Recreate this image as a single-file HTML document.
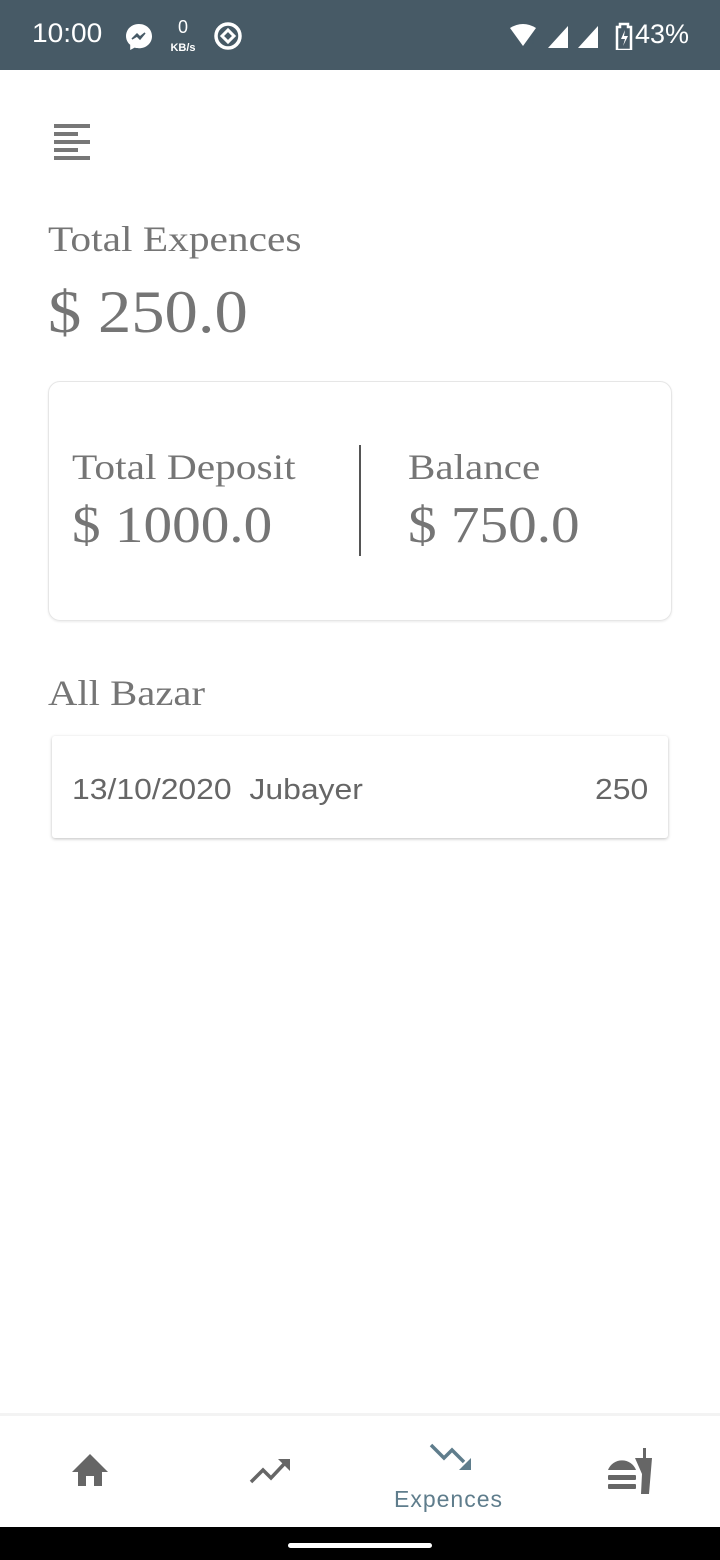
<!DOCTYPE html>
<html><head><meta charset="utf-8"><style>
*{margin:0;padding:0;box-sizing:border-box}
body{width:720px;height:1560px;position:relative;background:#fff;overflow:hidden;font-family:"Liberation Sans",sans-serif}
.a{position:absolute}
.serif{font-family:"Liberation Serif",serif;color:#757575;white-space:nowrap;transform-origin:0 0}
.sb{left:0;top:0;width:720px;height:70px;background:#475a66;color:#fff}
</style></head><body>
<div class="a sb">
 <div class="a" style="left:32px;top:18px;font-size:27px;transform:scaleX(1.04);transform-origin:0 0">10:00</div>
 <svg class="a" style="left:124px;top:22px" width="30" height="30" viewBox="0 0 30 30"><path d="M15 2C7.5 2 2 7.3 2 14c0 3.6 1.6 6.7 4.2 8.8V28l4.4-2.4c1.4.4 2.8.6 4.4.6 7.5 0 13-5.3 13-12S22.5 2 15 2z" fill="#fff"/><path d="M8 17l5-5 3 3 5-4-5 6-3-3z" fill="#475a66" stroke="#475a66" stroke-width="1.5"/></svg>
 <div class="a" style="left:168px;top:18px;font-size:18px;width:30px;text-align:center;line-height:18px">0<br><span style="font-size:11px;font-weight:bold">KB/s</span></div>
 <svg class="a" style="left:212px;top:20px" width="32" height="32" viewBox="0 0 32 32"><circle cx="16" cy="16" r="12" fill="none" stroke="#fff" stroke-width="3.5"/><path d="M10 16l6-6 6 6-6 6z" fill="none" stroke="#fff" stroke-width="3"/></svg>
 <svg class="a" style="left:508px;top:22px" width="150" height="28" viewBox="0 0 150 28"><path d="M2 6Q15 -2 28 6L15 24z" fill="#fff"/><text x="20" y="22" font-size="12" fill="#475a66" font-family="Liberation Sans">4</text><path d="M40 26L60 4V26z M70 26L90 4V26z" fill="#fff"/><path d="M112 2h8v3h3v23h-14V5h3z" fill="none" stroke="#fff" stroke-width="2.5"/><path d="M117 8l-4 9h4l-2 7 5-10h-4z" fill="#fff"/></svg>
 <div class="a" style="left:635px;top:19px;font-size:27px">43%</div>
</div>
<div class="a" style="left:54px;top:124px;width:36px;height:36px">
 <div class="a" style="top:0;width:36px;height:4px;background:#777"></div>
 <div class="a" style="top:8px;width:24px;height:4px;background:#777"></div>
 <div class="a" style="top:16px;width:36px;height:4px;background:#777"></div>
 <div class="a" style="top:24px;width:24px;height:4px;background:#777"></div>
 <div class="a" style="top:32px;width:36px;height:4px;background:#777"></div>
</div>
<div class="a serif" style="left:48px;top:218px;font-size:36px;transform:scaleX(1.15)">Total Expences</div>
<div class="a serif" style="left:48px;top:278px;font-size:60px;transform:scaleX(1.11)">$ 250.0</div>
<div class="a" style="left:48px;top:381px;width:624px;height:240px;border:1px solid #e6e6e6;border-radius:12px;box-shadow:0 1px 2px rgba(0,0,0,.08)"></div>
<div class="a serif" style="left:72px;top:446px;font-size:36px;transform:scaleX(1.15)">Total Deposit</div>
<div class="a serif" style="left:72px;top:496px;font-size:52px;transform:scaleX(1.1)">$ 1000.0</div>
<div class="a" style="left:359px;top:445px;width:2px;height:111px;background:#555"></div>
<div class="a serif" style="left:408px;top:446px;font-size:36px;transform:scaleX(1.14)">Balance</div>
<div class="a serif" style="left:408px;top:496px;font-size:52px;transform:scaleX(1.1)">$ 750.0</div>
<div class="a serif" style="left:48px;top:672px;font-size:36px;transform:scaleX(1.13)">All Bazar</div>
<div class="a" style="left:52px;top:736px;width:616px;height:102px;background:#fff;border-radius:3px;box-shadow:0 1px 3px rgba(0,0,0,.25)"></div>
<div class="a" style="left:72px;top:774px;font-size:29px;color:#666;transform:scaleX(1.1);transform-origin:0 0;white-space:nowrap">13/10/2020&nbsp; Jubayer</div>
<div class="a" style="left:595px;top:774px;font-size:29px;color:#666;transform:scaleX(1.1);transform-origin:0 0">250</div>
<div class="a" style="left:0;top:1413px;width:720px;height:3px;background:#f3f3f3"></div>
<svg class="a" style="left:70px;top:1452px" width="40" height="36" viewBox="0 0 40 36"><path d="M20 2L2 20h6v14h8V24h8v10h8V20h6z" fill="#666"/></svg>
<svg class="a" style="left:248px;top:1457px" width="46" height="30" viewBox="0 0 46 30"><path d="M3 25L15 13l8 8L38 5" fill="none" stroke="#666" stroke-width="3.5"/><path d="M30 2h12v12z" fill="#666"/></svg>
<svg class="a" style="left:428px;top:1442px" width="46" height="30" viewBox="0 0 46 30"><path d="M3 3l13 13 8-8 12 12" fill="none" stroke="#5f7d8c" stroke-width="3.5"/><path d="M43 16v12H31z" fill="#5f7d8c"/></svg>
<div class="a" style="left:394px;top:1486px;font-size:23px;color:#5f7d8c;letter-spacing:1px">Expences</div>
<svg class="a" style="left:606px;top:1448px" width="50" height="46" viewBox="0 0 50 46"><path d="M2 22a15 15 0 0 1 28 0z" fill="#666"/><rect x="2" y="27" width="28" height="5" rx="1" fill="#666"/><rect x="2" y="36" width="28" height="5" rx="1" fill="#666"/><path d="M29 10h17l-3 36h-8l1-20z" fill="#666"/><rect x="37" y="0" width="3" height="12" fill="#666"/></svg>
<div class="a" style="left:0;top:1527px;width:720px;height:33px;background:#000"></div>
<div class="a" style="left:288px;top:1543px;width:144px;height:5px;border-radius:3px;background:#fff"></div>
</body></html>
